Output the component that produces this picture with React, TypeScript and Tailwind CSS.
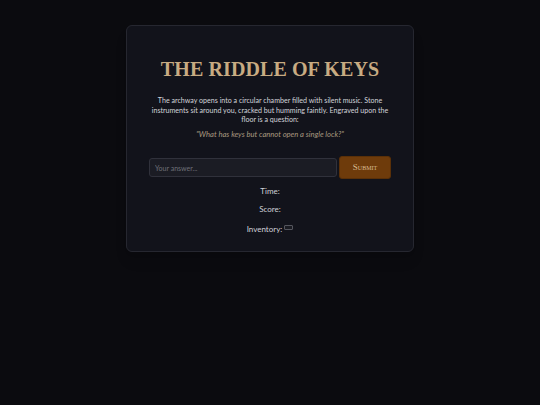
export default function App() {
  return (
    <div className="min-h-[405px] bg-[#0b0b0f] pt-[25px] font-['Lato',sans-serif]">
      <div className="mx-auto w-[288px] rounded-md border border-[#262730] bg-[#12131b] px-[22px] pb-[17px] pt-[31px] text-center shadow-lg">
        <h1 className="font-['Liberation_Serif',serif] text-[20px] font-bold leading-[24px] tracking-[0.1px] text-[#c8ab82]">
          THE RIDDLE OF KEYS
        </h1>
        <p className="mx-auto mt-[15px] w-[238px] text-[7.1px] leading-[9.7px] text-[#d2d3da]">
          The archway opens into a circular chamber filled with silent music. Stone instruments sit around you, cracked but
          humming faintly. Engraved upon the floor is a question:
        </p>
        <p className="mt-[4px] text-[7.6px] italic leading-[10px] text-[#a99a80]">
          "What has keys but cannot open a single lock?"
        </p>
        <form className="mt-[17px] flex items-center gap-[2px]" onSubmit={(e) => e.preventDefault()}>
          <input
            type="text"
            placeholder="Your answer..."
            className="h-[19px] w-[188px] rounded-[3px] border border-[#30313b] bg-[#1b1c24] px-[5px] text-[7px] text-[#ddd] outline-none placeholder:text-[#6f7078]"
          />
          <button
            type="submit"
            className="h-[23px] w-[52px] rounded-[3px] border border-[#5a3008] bg-[#6e3b0b] font-['Liberation_Serif',serif] text-[9px] text-[#d9bb92] [font-variant:small-caps]"
          >
            Submit
          </button>
        </form>
        <div className="mt-[7px] text-[8px] leading-[10px] text-[#d0d1d8]">
          Time: <span></span>
        </div>
        <div className="mt-[8px] text-[8px] leading-[10px] text-[#d0d1d8]">
          Score: <span></span>
        </div>
        <div className="mt-[10px] text-[8px] leading-[10px] text-[#d0d1d8]">
          Inventory:{" "}
          <span className="inline-block h-[5px] w-[9px] translate-y-[-3px] rounded-[1px] border border-[#55565e] bg-[#1a1b22] align-middle"></span>
        </div>
      </div>
    </div>
  );
}
